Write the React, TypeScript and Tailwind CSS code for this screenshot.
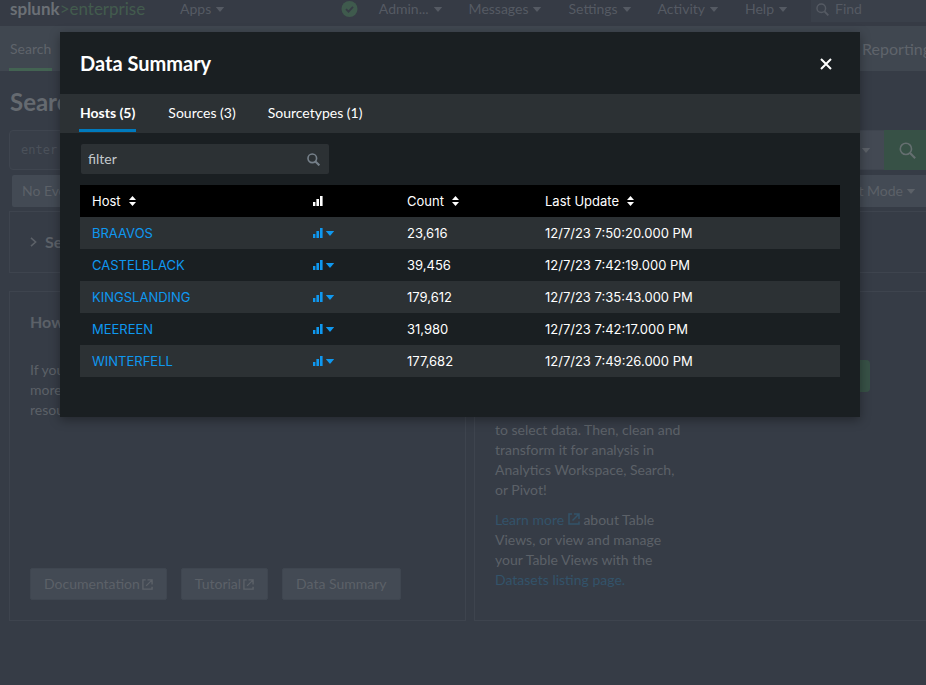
import type { ReactNode } from "react";

type HostRow = { host: string; count: string; updated: string };

const hosts: HostRow[] = [
  { host: "BRAAVOS", count: "23,616", updated: "12/7/23 7:50:20.000 PM" },
  { host: "CASTELBLACK", count: "39,456", updated: "12/7/23 7:42:19.000 PM" },
  { host: "KINGSLANDING", count: "179,612", updated: "12/7/23 7:35:43.000 PM" },
  { host: "MEEREEN", count: "31,980", updated: "12/7/23 7:42:17.000 PM" },
  { host: "WINTERFELL", count: "177,682", updated: "12/7/23 7:49:26.000 PM" },
];

function Caret() {
  return (
    <svg width="8" height="5" viewBox="0 0 8 5" fill="currentColor" aria-hidden="true">
      <path d="M0.4 0h7.2q.5 0 .2.4L4.4 4.6q-.4.4-.8 0L.2.4Q-.1 0 .4 0z" />
    </svg>
  );
}

function Magnifier({ size, weight = 2 }: { size: number; weight?: number }) {
  return (
    <svg width={size} height={size} viewBox="0 0 16 16" fill="none" stroke="currentColor" strokeWidth={weight} aria-hidden="true">
      <circle cx="6.5" cy="6.5" r="5.3" />
      <path d="M10.4 10.4l4.8 4.8" strokeWidth={weight * 1.3} />
    </svg>
  );
}

function External({ size }: { size: number }) {
  return (
    <svg width={size} height={size} viewBox="0 0 12 12" fill="none" stroke="currentColor" strokeWidth="1.5" aria-hidden="true">
      <path d="M4 1H1v10h10V8.5M4.5 7.5L10.5 1.5M6 1h5v5" />
    </svg>
  );
}

function Bars() {
  return (
    <svg width="10" height="10" viewBox="0 0 10 10" fill="currentColor" aria-hidden="true">
      <path d="M0 6h2.4v4H0zM3.4 3h2.6v7H3.400zM7 0h2.600v10H7z" />
    </svg>
  );
}

function SortArrows() {
  return (
    <svg width="7" height="10" viewBox="0 0 7 10" fill="currentColor" aria-hidden="true">
      <path d="M3.5 0L7 4H0zM3.5 10L0 6h7z" />
    </svg>
  );
}

function NavItem({ children }: { children: ReactNode }) {
  return (
    <button type="button" className="flex items-center gap-[5px]">
      {children}
      <Caret />
    </button>
  );
}

function SortHeader({ children }: { children: ReactNode }) {
  return (
    <th className="px-3 font-normal" scope="col">
      <button type="button" className="flex items-center gap-2">
        {children}
        <SortArrows />
      </button>
    </th>
  );
}

function PanelButton({ children }: { children: ReactNode }) {
  return (
    <button type="button" className="flex h-8 items-center gap-0.5 rounded-xs border border-[#3f4650] bg-[#434a54] px-[13px]">
      {children}
    </button>
  );
}

function SearchPage() {
  return (
    <div className="min-w-[940px]">
      <header className="flex h-[26px] items-start bg-[#363b45] px-[9px] text-[#555a63]">
        <a href="#home" className="w-[171px] pl-px text-[17px] leading-[18px] text-[#435c4e]">
          <b className="text-[#6b7076]">splunk</b>&gt;enterprise
        </a>
        <nav aria-label="Apps" className="leading-[18px]">
          <NavItem>Apps</NavItem>
        </nav>
        <nav aria-label="System" className="ml-auto flex items-center gap-[27px] leading-[18px]">
          <svg width="17" height="16" viewBox="0 0 17 16" className="-mr-1.5" aria-hidden="true">
            <circle cx="8.5" cy="8" r="8" fill="#3f5a4d" />
            <path d="M5 8.2l2.5 2.4L12 5.8" fill="none" stroke="#363b45" strokeWidth="1.8" />
          </svg>
          <NavItem>Admin...</NavItem>
          <NavItem>Messages</NavItem>
          <NavItem>Settings</NavItem>
          <NavItem>Activity</NavItem>
          <NavItem>Help</NavItem>
        </nav>
        <label className="ml-6 flex h-[22px] w-[120px] items-start gap-1.5 bg-[#3a404a] pl-[5px]">
          <span className="pt-[3px]">
            <Magnifier size={13} weight={1.8} />
          </span>
          <input aria-label="Find" placeholder="Find" className="h-[18px] w-full min-w-0 bg-transparent outline-none placeholder:text-[#555a63]" />
        </label>
      </header>

      <div className="flex h-[45px] items-center justify-between bg-[#404750] px-[9px] text-[#5f646b]">
        <a href="#search" className="flex h-full items-center border-b-3 border-[#436352] px-px pt-1">
          Search
        </a>
        <span className="text-base">Search &amp; Reporting</span>
      </div>

      <main className="px-[9px]">
        <h1 className="flex h-[59px] items-center pt-0.5 pl-px text-2xl font-bold text-[#656a70]">Search</h1>

        <div className="flex h-10">
          <input
            aria-label="Search query"
            placeholder="enter search here..."
            className="min-w-0 flex-1 rounded-l-sm border border-[#3f454f] bg-[#383e48] px-[11px] font-['DejaVu_Sans_Mono',monospace] text-xs outline-none placeholder:text-[#4b515a]"
          />
          <button type="button" className="flex items-center gap-2 border-y border-[#3f454f] bg-[#434953] px-3.5">
            All time
            <Caret />
          </button>
          <button type="button" aria-label="Search" className="flex w-[47px] items-center justify-center bg-[#375146] text-[#656f70]">
            <Magnifier size={17} weight={1.5} />
          </button>
        </div>

        <div className="mt-[5px] flex h-8 justify-between pl-[3px]">
          <button type="button" className="flex items-center gap-1 rounded-xs bg-[#434a54] px-2.5">
            No Event Sampling
            <Caret />
          </button>
          <button type="button" className="flex items-center gap-1 rounded-xs bg-[#434a54] px-4">
            Smart Mode
            <Caret />
          </button>
        </div>

        <section className="mt-1 flex h-[62px] items-center gap-2 border border-[#3e444e] px-5">
          <svg width="7" height="10" viewBox="0 0 7 10" fill="none" stroke="currentColor" strokeWidth="1.6" aria-hidden="true">
            <path d="M1 0.8L5.6 5 1 9.2" />
          </svg>
          <h2 className="text-base font-bold">Search History</h2>
        </section>

        <div className="mt-[18px] grid grid-cols-2 gap-2">
          <section className="flex flex-col border border-[#3e444e] p-5">
            <h2 className="text-base leading-5 font-bold">How to Search</h2>
            <p className="mt-7 leading-5">
              If you are not familiar with the search features, or want to learn
              <br />
              more, or see your available
              <br />
              resources, see one of the following:
            </p>
            <div className="mt-auto flex gap-3.5">
              <PanelButton>
                Documentation <External size={11} />
              </PanelButton>
              <PanelButton>
                Tutorial <External size={11} />
              </PanelButton>
              <PanelButton>Data Summary</PanelButton>
            </div>
          </section>
          <section className="border border-[#3e444e] px-5 pt-5 pb-[30px]">
            <h2 className="text-base leading-5 font-bold">Analyze Your Data with Table Views</h2>
            <div className="mt-7 flex items-start justify-between pr-10 leading-5">
              <div className="w-[192px]">
                <p>
                  Table Views let you prepare data without using SPL. First, use a point-and-click interface to select data. Then,
                  clean and transform it for analysis in Analytics Workspace, Search, or Pivot!
                </p>
                <p className="mt-2.5">
                  <a href="#learn" className="text-[#33536a]">
                    Learn more{" "}
                    <span className="inline-block">
                      <External size={12} />
                    </span>
                  </a>{" "}
                  about Table Views, or view and manage your Table Views with the{" "}
                  <a href="#datasets" className="text-[#33536a]">
                    Datasets listing page.
                  </a>
                </p>
              </div>
              <button type="button" className="h-8 rounded-sm bg-[#375146] px-3">
                Create Table View
              </button>
            </div>
          </section>
        </div>
      </main>
    </div>
  );
}

function DataSummary() {
  return (
    <div
      role="dialog"
      aria-labelledby="summary-title"
      className="w-full max-w-[800px] bg-[#1a1f22] pb-10 text-white shadow-[0_3px_10px_rgba(0,0,0,0.35)]"
    >
      <div className="flex h-[62px] items-center justify-between pr-7 pl-5">
        <h2 id="summary-title" className="text-xl font-bold">
          Data Summary
        </h2>
        <button type="button" aria-label="Close" className="pt-0.5">
          <svg width="12" height="12" viewBox="0 0 12 12" stroke="currentColor" strokeWidth="2" aria-hidden="true">
            <path d="M1 1l10 10M11 1L1 11" />
          </svg>
        </button>
      </div>
      <div role="tablist" className="flex h-[39px] gap-8 bg-[#2c3134] px-[19px] pb-px">
        <button type="button" role="tab" aria-selected="true" className="border-b-3 border-[#007abd] px-px pt-[3px] font-bold">
          Hosts (5)
        </button>
        <button type="button" role="tab" aria-selected="false">
          Sources (3)
        </button>
        <button type="button" role="tab" aria-selected="false">
          Sourcetypes (1)
        </button>
      </div>
      <div className="px-5 pt-[11px]">
        <label className="ml-px flex h-[30px] w-[248px] items-center rounded-xs bg-[#2c3134] pr-[9px] pl-[7px] text-[#76808a]">
          <input aria-label="Filter" placeholder="filter" className="min-w-0 flex-1 bg-transparent outline-none placeholder:text-[#c3c8cc]" />
          <Magnifier size={13} weight={2} />
        </label>
        <table className="mt-[11px] w-full table-fixed text-left font-['Inter',sans-serif] text-[13px]">
          <colgroup>
            <col className="w-[221px]" />
            <col className="w-[94px]" />
            <col className="w-[138px]" />
            <col />
          </colgroup>
          <thead>
            <tr className="h-8 bg-black">
              <SortHeader>Host</SortHeader>
              <th scope="col" aria-label="Distribution" className="px-3">
                <Bars />
              </th>
              <SortHeader>Count</SortHeader>
              <SortHeader>Last Update</SortHeader>
            </tr>
          </thead>
          <tbody>
            {hosts.map((row) => (
              <tr key={row.host} className="h-8 odd:bg-[#2c3134]">
                <td className="px-3">
                  <a href={"#" + row.host} className="text-[#0f98f0]">
                    {row.host}
                  </a>
                </td>
                <td className="px-3 text-[#0f98f0]">
                  <button type="button" aria-label={"Chart " + row.host} className="flex items-center gap-[3px]">
                    <Bars />
                    <Caret />
                  </button>
                </td>
                <td className="px-3">{row.count}</td>
                <td className="px-3">{row.updated}</td>
              </tr>
            ))}
          </tbody>
        </table>
      </div>
    </div>
  );
}

export default function App() {
  return (
    <div className="relative min-h-screen overflow-hidden bg-[#363c46] font-['Lato',sans-serif] text-sm text-[#5c6168] [&_svg]:shrink-0">
      <SearchPage />
      <div className="absolute inset-0 flex items-start justify-center pt-8 pr-[66px] pl-[60px]">
        <DataSummary />
      </div>
    </div>
  );
}
